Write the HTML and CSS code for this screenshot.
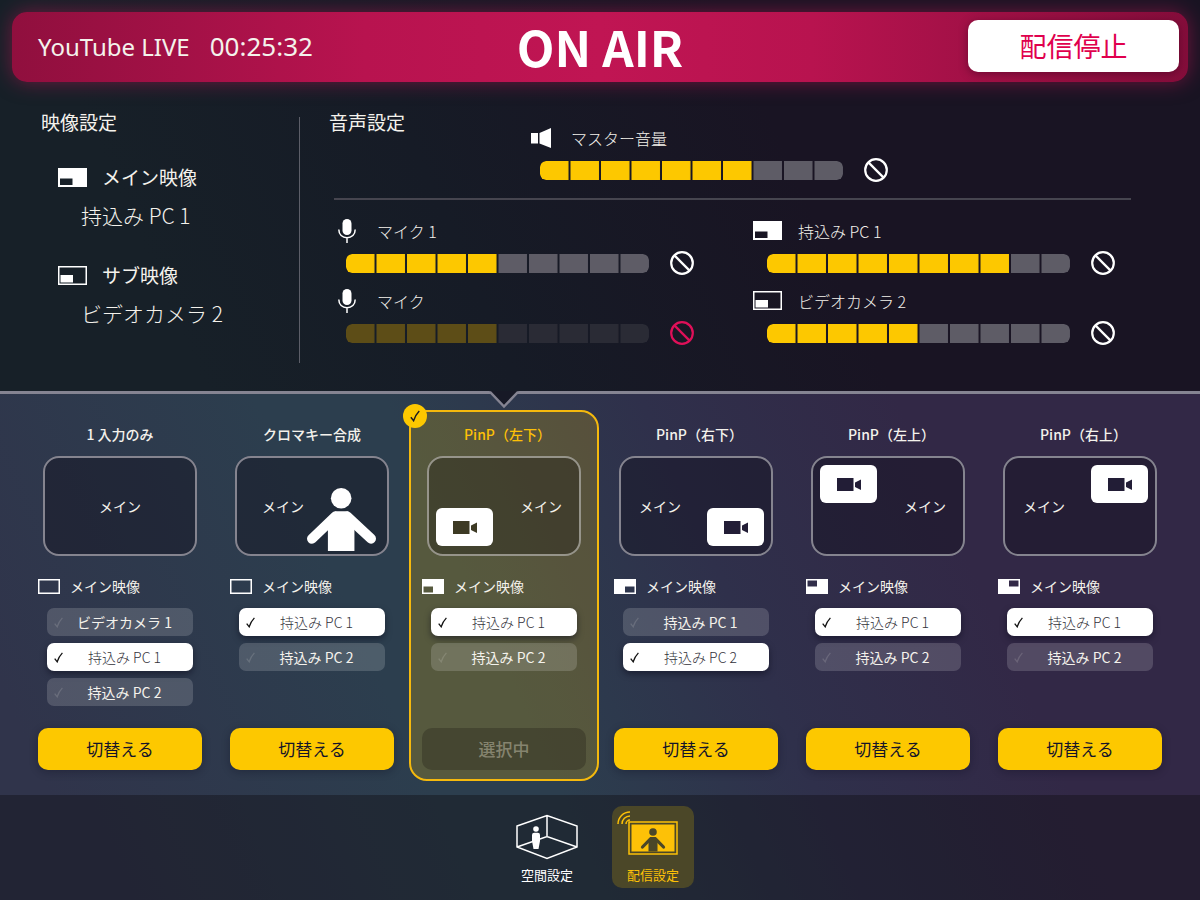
FILE: index.html
```html
<!DOCTYPE html>
<html lang="ja">
<head>
  <meta charset="UTF-8">
  <meta name="viewport" content="width=device-width, initial-scale=1">
  <title>配信設定</title>
  <link rel="stylesheet" href="styles.css">
</head>
<body>

  <!-- ICONS -->
  <svg class="sprite" aria-hidden="true">
    <symbol id="pip-main" viewBox="0 0 29 19"><path fill-rule="evenodd" d="M0 0H29V19H0ZM2 10.5V17H14.5V10.5Z"/></symbol>
    <symbol id="pip-sub" viewBox="0 0 29 19"><path d="M.75 .75H28.25V18.25H.75Z" fill="none" stroke="currentColor" stroke-width="1.5"/><path d="M2.5 9H15V16.5H2.5Z"/></symbol>
    <symbol id="pip-none" viewBox="0 0 22 15"><path d="M.75 .75H21.25V14.25H.75Z" fill="none" stroke="currentColor" stroke-width="1.5"/></symbol>
    <symbol id="pip-bl" viewBox="0 0 22 15"><path fill-rule="evenodd" d="M0 0H22V15H0ZM1.5 7.5V13.5H11V7.5Z"/></symbol>
    <symbol id="pip-br" viewBox="0 0 22 15"><path fill-rule="evenodd" d="M0 0H22V15H0ZM11 7.5V13.5H20.5V7.5Z"/></symbol>
    <symbol id="pip-tl" viewBox="0 0 22 15"><path fill-rule="evenodd" d="M0 0H22V15H0ZM1.5 1.5V7.5H11V1.5Z"/></symbol>
    <symbol id="pip-tr" viewBox="0 0 22 15"><path fill-rule="evenodd" d="M0 0H22V15H0ZM11 1.5V7.5H20.5V1.5Z"/></symbol>
    <symbol id="mic" viewBox="0 0 18 24"><rect x="4.5" y="0" width="9" height="16" rx="4.5"/><path d="M.8 10.5C.8 15.5 4.3 18.8 9 18.8S17.2 15.5 17.2 10.5M9 18.8V24" fill="none" stroke="currentColor" stroke-width="1.5"/></symbol>
    <symbol id="speaker" viewBox="0 0 20 20"><path d="M0 5H7V15.5H0ZM8.5 5L20 0V20L8.5 15.5Z"/></symbol>
    <symbol id="ban" viewBox="0 0 24 24"><g fill="none" stroke="currentColor" stroke-width="2.2"><circle cx="12" cy="12" r="10.8"/><path d="M4.4 4.4L19.6 19.6"/></g></symbol>
    <symbol id="check" viewBox="0 0 9 11"><path d="M.7 6.6L3.2 9.8C4.2 6.6 6 3.4 8.4 .9" fill="none" stroke="currentColor" stroke-width="1.3"/></symbol>
    <symbol id="camera" viewBox="0 0 24 13"><path d="M0 0H16.5V13H0ZM18 4.5L24 1.5V12L18 9Z"/></symbol>
    <symbol id="person" viewBox="0 0 208 190"><circle cx="103" cy="31" r="31"/><path d="M84 70H124L143 100V190H63V100Z"/><path d="M85 86L15 153M121 86L193 153" fill="none" stroke="currentColor" stroke-width="30" stroke-linecap="round"/></symbol>
  </svg>

  <!-- MONITOR -->
  <div class="monitor">
    <header class="onair">
      <p class="onair-status"><span>YouTube LIVE</span><span class="time">00:25:32</span></p>
      <h1>ON AIR</h1>
      <button class="stop-btn" type="button">配信停止</button>
    </header>

    <div class="settings">
      <section class="video">
        <h2>映像設定</h2>
        <dl>
          <dt><svg class="pip"><use href="#pip-main"/></svg>メイン映像</dt>
          <dd>持込み PC 1</dd>
          <dt><svg class="pip"><use href="#pip-sub"/></svg>サブ映像</dt>
          <dd>ビデオカメラ 2</dd>
        </dl>
      </section>

      <section class="audio">
        <div class="audio-top">
          <h2>音声設定</h2>
          <div class="channel">
            <label for="vol-master"><span class="icon-box"><svg class="speaker"><use href="#speaker"/></svg></span>マスター音量</label>
            <div class="channel-row">
              <input class="meter" id="vol-master" type="range" min="0" max="10" value="7" style="--level: 70%">
              <button class="mute" type="button" aria-label="ミュート"><svg><use href="#ban"/></svg></button>
            </div>
          </div>
        </div>
        <div class="channels">
          <div class="channel">
            <label for="vol-mic1"><span class="icon-box"><svg class="mic"><use href="#mic"/></svg></span>マイク 1</label>
            <div class="channel-row">
              <input class="meter" id="vol-mic1" type="range" min="0" max="10" value="5" style="--level: 50%">
              <button class="mute" type="button" aria-label="ミュート"><svg><use href="#ban"/></svg></button>
            </div>
          </div>
          <div class="channel">
            <label for="vol-pc1"><span class="icon-box"><svg class="pip"><use href="#pip-main"/></svg></span>持込み PC 1</label>
            <div class="channel-row">
              <input class="meter" id="vol-pc1" type="range" min="0" max="10" value="8" style="--level: 80%">
              <button class="mute" type="button" aria-label="ミュート"><svg><use href="#ban"/></svg></button>
            </div>
          </div>
          <div class="channel muted">
            <label for="vol-mic2"><span class="icon-box"><svg class="mic"><use href="#mic"/></svg></span>マイク</label>
            <div class="channel-row">
              <input class="meter" id="vol-mic2" type="range" min="0" max="10" value="5" style="--level: 50%">
              <button class="mute" type="button" aria-label="ミュート解除"><svg><use href="#ban"/></svg></button>
            </div>
          </div>
          <div class="channel">
            <label for="vol-cam2"><span class="icon-box"><svg class="pip"><use href="#pip-sub"/></svg></span>ビデオカメラ 2</label>
            <div class="channel-row">
              <input class="meter" id="vol-cam2" type="range" min="0" max="10" value="5" style="--level: 50%">
              <button class="mute" type="button" aria-label="ミュート"><svg><use href="#ban"/></svg></button>
            </div>
          </div>
        </div>
      </section>
    </div>
  </div>

  <!-- PRESETS -->
  <main class="presets">
    <section class="preset">
      <h3>1 入力のみ</h3>
      <div class="preview"><span>メイン</span></div>
      <p class="source-title"><svg class="pip-small"><use href="#pip-none"/></svg>メイン映像</p>
      <div class="options">
        <label class="option"><input type="radio" name="p1"><svg class="check"><use href="#check"/></svg><span>ビデオカメラ 1</span></label>
        <label class="option"><input type="radio" name="p1" checked><svg class="check"><use href="#check"/></svg><span>持込み PC 1</span></label>
        <label class="option"><input type="radio" name="p1"><svg class="check"><use href="#check"/></svg><span>持込み PC 2</span></label>
      </div>
      <button class="switch-btn" type="button">切替える</button>
    </section>

    <section class="preset">
      <h3>クロマキー合成</h3>
      <div class="preview chroma"><span>メイン</span><svg class="person"><use href="#person"/></svg></div>
      <p class="source-title"><svg class="pip-small"><use href="#pip-none"/></svg>メイン映像</p>
      <div class="options">
        <label class="option"><input type="radio" name="p2" checked><svg class="check"><use href="#check"/></svg><span>持込み PC 1</span></label>
        <label class="option"><input type="radio" name="p2"><svg class="check"><use href="#check"/></svg><span>持込み PC 2</span></label>
      </div>
      <button class="switch-btn" type="button">切替える</button>
    </section>

    <section class="preset selected">
      <svg class="notch" viewBox="0 0 30 18"><path class="notch-fill" d="M0 0H30L28 2L15 15.5L2 2Z"/><path class="notch-line" d="M0 1.5H1.5L15 15.5L28.5 1.5H30"/></svg>
      <span class="badge"><svg><use href="#check"/></svg></span>
      <h3 class="pinp-title">PinP（左下）</h3>
      <div class="preview left bottom"><span>メイン</span><div class="pinp"><svg><use href="#camera"/></svg></div></div>
      <p class="source-title"><svg class="pip-small"><use href="#pip-bl"/></svg>メイン映像</p>
      <div class="options">
        <label class="option"><input type="radio" name="p3" checked><svg class="check"><use href="#check"/></svg><span>持込み PC 1</span></label>
        <label class="option"><input type="radio" name="p3"><svg class="check"><use href="#check"/></svg><span>持込み PC 2</span></label>
      </div>
      <button class="switch-btn" type="button" disabled>選択中</button>
    </section>

    <section class="preset">
      <h3 class="pinp-title">PinP（右下）</h3>
      <div class="preview right bottom"><span>メイン</span><div class="pinp"><svg><use href="#camera"/></svg></div></div>
      <p class="source-title"><svg class="pip-small"><use href="#pip-br"/></svg>メイン映像</p>
      <div class="options">
        <label class="option"><input type="radio" name="p4"><svg class="check"><use href="#check"/></svg><span>持込み PC 1</span></label>
        <label class="option"><input type="radio" name="p4" checked><svg class="check"><use href="#check"/></svg><span>持込み PC 2</span></label>
      </div>
      <button class="switch-btn" type="button">切替える</button>
    </section>

    <section class="preset">
      <h3 class="pinp-title">PinP（左上）</h3>
      <div class="preview left top"><span>メイン</span><div class="pinp"><svg><use href="#camera"/></svg></div></div>
      <p class="source-title"><svg class="pip-small"><use href="#pip-tl"/></svg>メイン映像</p>
      <div class="options">
        <label class="option"><input type="radio" name="p5" checked><svg class="check"><use href="#check"/></svg><span>持込み PC 1</span></label>
        <label class="option"><input type="radio" name="p5"><svg class="check"><use href="#check"/></svg><span>持込み PC 2</span></label>
      </div>
      <button class="switch-btn" type="button">切替える</button>
    </section>

    <section class="preset">
      <h3 class="pinp-title">PinP（右上）</h3>
      <div class="preview right top"><span>メイン</span><div class="pinp"><svg><use href="#camera"/></svg></div></div>
      <p class="source-title"><svg class="pip-small"><use href="#pip-tr"/></svg>メイン映像</p>
      <div class="options">
        <label class="option"><input type="radio" name="p6" checked><svg class="check"><use href="#check"/></svg><span>持込み PC 1</span></label>
        <label class="option"><input type="radio" name="p6"><svg class="check"><use href="#check"/></svg><span>持込み PC 2</span></label>
      </div>
      <button class="switch-btn" type="button">切替える</button>
    </section>
  </main>

  <!-- NAVIGATION -->
  <nav class="tabs">
    <a class="tab" href="#space">
      <svg viewBox="0 0 62 46">
        <path d="M1 12L31 1.5L61 12V33L31 44.5L1 33ZM31 1.5V22.5M1 33L31 22.5L61 33" fill="none" stroke="currentColor" stroke-width="1.5"/>
        <circle cx="20" cy="15" r="2.8"/>
        <path d="M16 21Q16 18.8 18.2 18.8H21.800Q24 18.8 24 21V27L22.500 35H17.500L16 27Z"/>
      </svg>
      空間設定
    </a>
    <a class="tab active" href="#stream" aria-current="page">
      <svg viewBox="0 0 62 46">
        <path d="M7 8H55V40H7Z" fill="none" stroke="currentColor" stroke-width="1.5"/>
        <path d="M9.5 10.5H52.5V37.5H9.5Z"/>
        <g class="cutout">
          <circle cx="31" cy="18" r="3.8"/>
          <path d="M28.5 23H33.5L35.5 27V37.5H26.5V27Z"/>
          <path d="M28.5 24.800L20.5 33M33.5 24.800L41.5 33" fill="none" stroke-width="3.2" stroke-linecap="round"/>
        </g>
      </svg>
      <svg class="wave" viewBox="0 0 14 14"><path d="M1 13A12 12 0 0 1 13 1M5 13A8 8 0 0 1 13 5M9 13A4 4 0 0 1 13 9" fill="none" stroke="currentColor" stroke-width="1.5"/></svg>
      配信設定
    </a>
  </nav>

</body>
</html>
```
FILE: styles.css
```css
* {
  box-sizing: border-box;
}
body {
  margin: 0;
  min-height: 100vh;
  display: flex;
  flex-direction: column;
  font-family: "Noto Sans CJK JP", sans-serif;
  font-size: 14px;
  line-height: 20px;
  color: #f4f2ec;
  background: linear-gradient(66deg, #30344b 6%, #2c3e4e 30%, #2c3e4e 38%, #2f304b 54%, #322846 70%, #322846 100%);
}
h1, h2, h3, p, dl, dd {
  margin: 0;
}
button {
  font: inherit;
  border: none;
  padding: 0;
  cursor: pointer;
}
svg {
  display: block;
  flex: none;
  fill: currentColor;
}
.sprite {
  position: absolute;
  width: 0;
  height: 0;
}

/* monitor */
.monitor {
  padding-top: 12px;
  background: linear-gradient(66deg, #172028 15%, #161b26 38%, #191423 65%);
  border-bottom: 3px solid #858492;
}
.onair {
  display: grid;
  grid-template-columns: 1fr auto 1fr;
  align-items: center;
  min-height: 70px;
  margin: 0 12px;
  padding: 0 9px 2px;
  border-radius: 15px;
  background: linear-gradient(90deg, #900f3e, #b8134f 30%, #c01553 50%, #b8134f 68%, #850d3b);
  box-shadow: 0 0 20px rgba(200, 20, 85, 0.5);
}
.onair-status {
  display: flex;
  align-items: baseline;
  gap: 20px;
  padding-left: 17px;
  font-family: "Noto Sans", sans-serif;
  font-size: 24px;
  line-height: 36px;
}
.time {
  font-size: 26px;
}
.onair h1 {
  font-size: 49px;
  line-height: 60px;
  font-weight: 700;
  color: #fff;
}
.stop-btn {
  justify-self: end;
  width: 211px;
  height: 52px;
  border-radius: 10px;
  background: #fff;
  color: #e0004d;
  font-size: 27px;
  box-shadow: 0 2px 8px rgba(60, 0, 30, 0.5);
}
.settings {
  display: flex;
  padding: 28px 29px 28px 41px;
}
.settings h2 {
  font-size: 19px;
  line-height: 24px;
  font-weight: 400;
}
.video {
  width: 258px;
  padding-bottom: 37px;
}
.video dl {
  padding-top: 31px;
}
.video dt {
  display: flex;
  align-items: center;
  gap: 15px;
  padding-left: 17px;
  font-size: 19px;
  line-height: 24px;
}
.video dd {
  padding-left: 40px;
  margin: 14px 0 36px;
  font-size: 21px;
  line-height: 24px;
  font-weight: 300;
}
.video dd:last-child {
  margin-bottom: 1px;
}
.audio {
  flex: 1;
  position: relative;
  padding-left: 30px;
}
.audio::before {
  content: "";
  position: absolute;
  left: 0;
  top: 7px;
  bottom: 0;
  width: 1px;
  background: #5c5e68;
}
.audio-top {
  display: grid;
  grid-template-columns: 194px minmax(0, 421px);
  margin: 0 40px 0 0;
  padding-bottom: 16px;
}
.audio-top .channel {
  padding-top: 16px;
}
.channels {
  display: grid;
  grid-template-columns: 1fr 1fr;
  row-gap: 14px;
  position: relative;
  padding-top: 21px;
}
.channels::before {
  content: "";
  position: absolute;
  left: 5px;
  right: 40px;
  top: 0;
  height: 2px;
  background: #46454f;
}
.channel label {
  display: flex;
  align-items: center;
  gap: 16px;
  height: 23px;
  padding-left: 3px;
  font-size: 16px;
  line-height: 22px;
  font-weight: 300;
}
.channel-row {
  display: flex;
  align-items: center;
  gap: 21px;
  margin-top: 9px;
  padding: 0 56px 0 17px;
}
.icon-box {
  display: flex;
  justify-content: center;
  width: 29px;
  color: #fff;
}
.pip {
  width: 29px;
  height: 19px;
  color: #fff;
}
.mic {
  width: 18px;
  height: 24px;
}
.speaker {
  width: 20px;
  height: 20px;
}

/* volume bar cut into ten blocks */
.meter {
  appearance: none;
  flex: 1;
  min-width: 0;
  height: 19px;
  margin: 0;
  border-radius: 6px;
  background: linear-gradient(#fdc800, #fdc800) 0 0 / var(--level) 100% no-repeat #5e5c66;
  mask: linear-gradient(#000, #000) 0 0 / calc((100% - 18px) / 10) 100% space;
  cursor: pointer;
}
.meter::-webkit-slider-thumb {
  appearance: none;
  width: 1px;
  height: 19px;
  opacity: 0;
}
.mute {
  background: none;
  color: #fff;
}
.mute svg {
  width: 24px;
  height: 24px;
}
.muted .meter {
  background-image: linear-gradient(#5d4d17, #5d4d17);
  background-color: #2a2b35;
}
.muted .mute {
  color: #df1059;
}

/* presets */
.presets {
  flex: 1;
  display: grid;
  grid-template-columns: repeat(6, minmax(0, 1fr));
  padding: 16px 24px 14px;
}
.preset {
  position: relative;
  display: flex;
  flex-direction: column;
  margin: 0 1px;
  padding: 12px 11px 9px;
  border: 2px solid transparent;
  border-radius: 18px;
}
.preset h3 {
  font-size: 14px;
  line-height: 20px;
  font-weight: 500;
  text-align: center;
}
/* evens out the blank half of the closing bracket */
.preset .pinp-title {
  padding-left: 7px;
}
.selected {
  background: rgba(255, 200, 0, 0.2);
  border-color: #f5b90d;
}
.selected h3 {
  color: #fdc007;
}
.badge {
  position: absolute;
  left: -8px;
  top: -8px;
  display: flex;
  align-items: center;
  justify-content: center;
  width: 24px;
  height: 24px;
  border-radius: 50%;
  background: #fdc800;
  color: #1a1a24;
}
.badge svg {
  width: 10px;
  height: 12px;
}
.notch {
  position: absolute;
  left: 50%;
  top: -21px;
  width: 30px;
  height: 18px;
  margin-left: -15px;
}
.notch-fill {
  fill: #171926;
}
.notch-line {
  fill: none;
  stroke: #858492;
  stroke-width: 2.5;
}
.preview {
  display: flex;
  justify-content: center;
  align-items: center;
  height: 100px;
  margin: 12px 5px 0;
  padding: 7px 7px 8px;
  border: 2px solid #85848f;
  border-radius: 16px;
  background: rgba(16, 12, 24, 0.4);
}
.selected .preview {
  background: rgba(30, 26, 20, 0.35);
  border-color: #96948a;
}
.preview.chroma {
  justify-content: space-between;
  padding: 0 11px 0 25px;
}
.person {
  align-self: flex-end;
  width: 69px;
  height: 63px;
  margin-bottom: 3px;
  color: #fff;
}
.preview.left {
  flex-direction: row-reverse;
}
.preview.left,
.preview.right {
  justify-content: space-between;
}
.preview.left span {
  padding-right: 10px;
}
.preview.right span {
  padding-left: 11px;
}
.pinp {
  display: flex;
  align-items: center;
  justify-content: center;
  width: 57px;
  height: 38px;
  border-radius: 6px;
  background: #fff;
  color: #221d36;
}
.selected .pinp {
  color: #3d3a24;
}
.pinp svg {
  width: 24px;
  height: 13px;
}
.top .pinp {
  align-self: flex-start;
}
.bottom .pinp {
  align-self: flex-end;
}
.source-title {
  display: flex;
  align-items: center;
  gap: 10px;
  margin-top: 20px;
}
.pip-small {
  width: 22px;
  height: 15px;
  color: #fff;
}
.options {
  display: flex;
  flex-direction: column;
  gap: 7px;
  margin: 12px 9px 22px;
}
.option {
  position: relative;
  display: flex;
  align-items: center;
  height: 28px;
  padding: 0 7px;
  border-radius: 7px;
  background: rgba(255, 255, 255, 0.16);
  cursor: pointer;
}
.option input {
  position: absolute;
  inset: 0;
  margin: 0;
  opacity: 0;
}
.option span {
  flex: 1;
  text-align: center;
}
.check {
  width: 9px;
  height: 11px;
  opacity: 0.15;
}
.option:has(:checked) {
  background: #fff;
  color: #33323a;
  font-weight: 300;
  box-shadow: 0 3px 6px rgba(10, 10, 25, 0.5);
}
.option:has(:checked) .check {
  color: #111;
  opacity: 1;
}
.switch-btn {
  height: 42px;
  margin-top: auto;
  border-radius: 10px;
  background: #fdc800;
  color: #14142a;
  font-size: 17px;
  box-shadow: 0 2px 8px rgba(10, 10, 25, 0.3);
}
.switch-btn:disabled {
  background: rgba(30, 26, 20, 0.3);
  color: #85846f;
  font-weight: 500;
  box-shadow: none;
  cursor: default;
}

/* tabs */
.tabs {
  display: flex;
  justify-content: center;
  gap: 24px;
  padding: 11px 0 12px;
  background: rgba(14, 12, 18, 0.4);
}
.tab {
  position: relative;
  display: flex;
  flex-direction: column;
  align-items: center;
  gap: 5px;
  width: 82px;
  height: 82px;
  padding-top: 8px;
  border-radius: 10px;
  color: #fff;
  font-size: 13px;
  line-height: 20px;
  text-decoration: none;
}
.tab svg {
  width: 62px;
  height: 46px;
}
.tab.active {
  background: #4b4728;
  color: #fdc107;
}
.tab .wave {
  position: absolute;
  left: 5px;
  top: 5px;
  width: 14px;
  height: 14px;
}
.cutout {
  fill: #4b4728;
  stroke: #4b4728;
  stroke-width: 0;
}
```
